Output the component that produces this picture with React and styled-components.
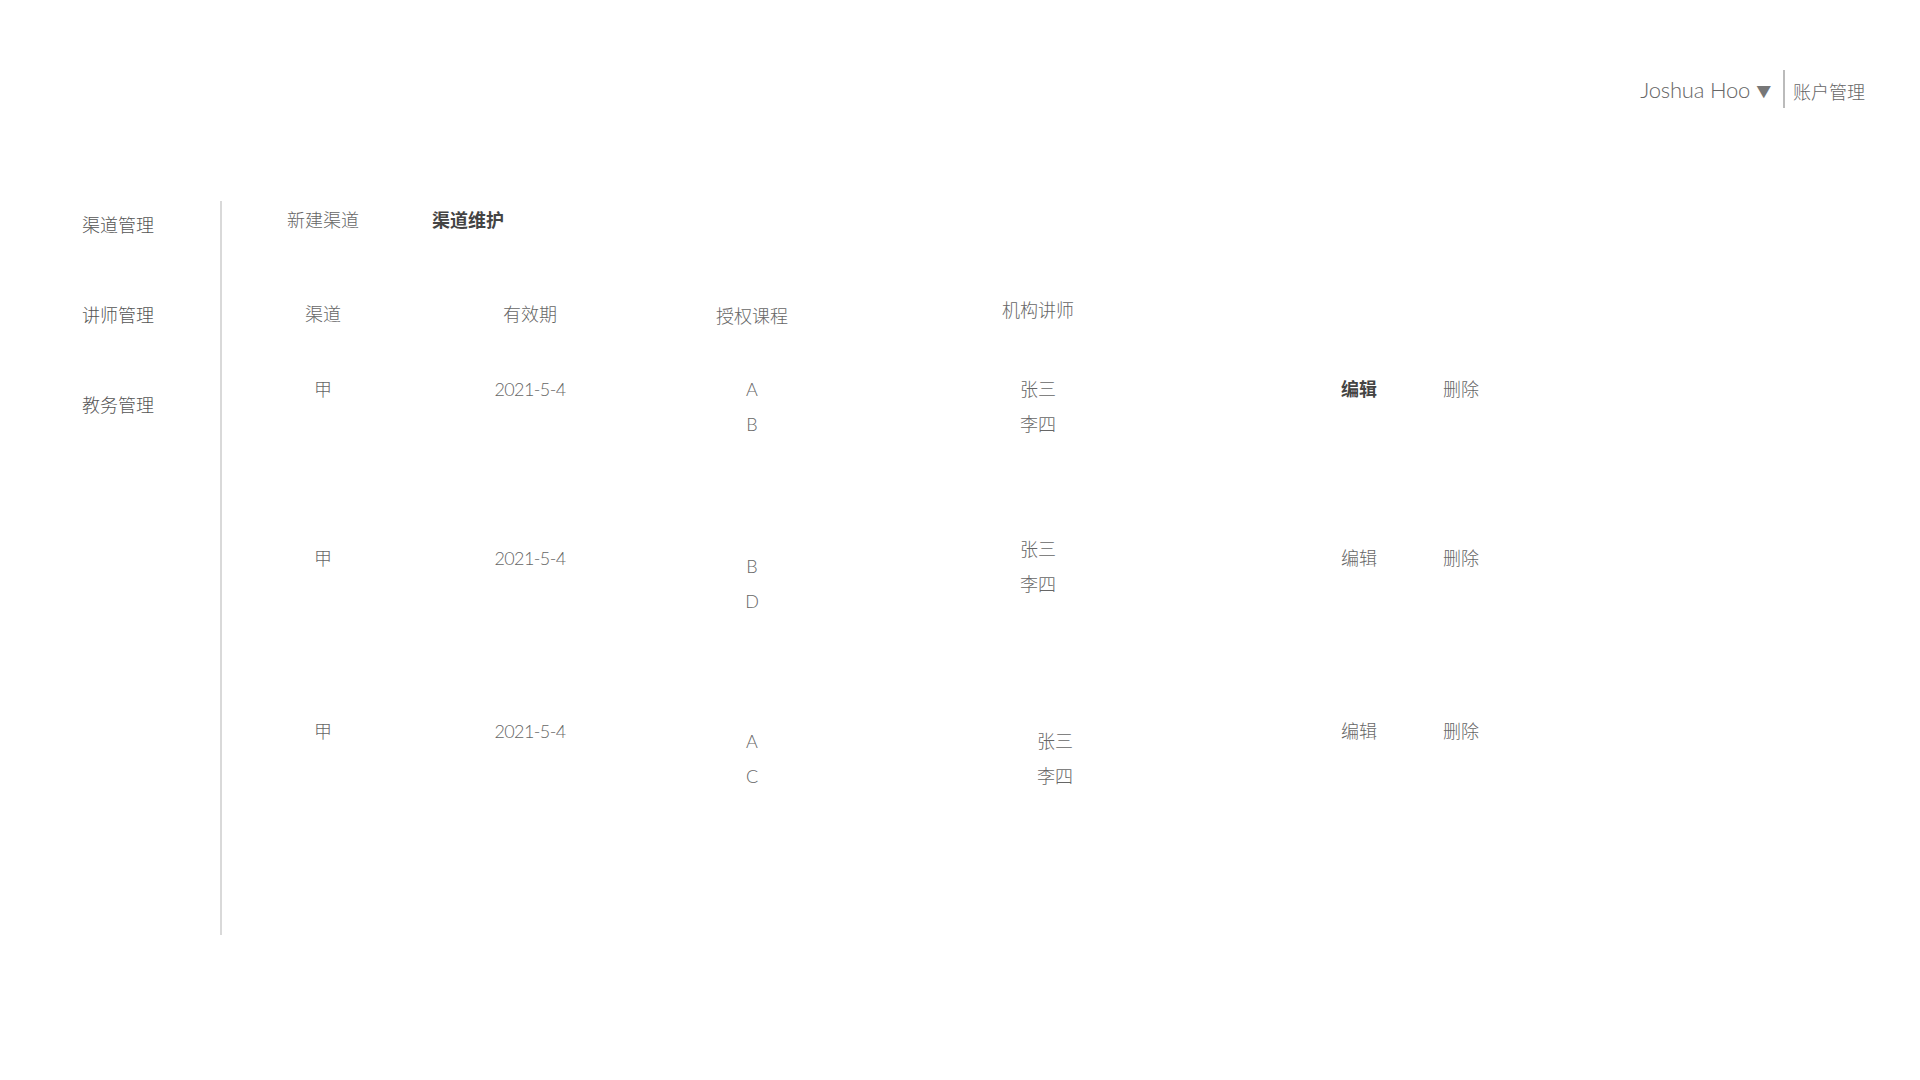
import React from 'react';
import styled, { createGlobalStyle } from 'styled-components';

const GlobalStyle = createGlobalStyle`
	html, body {
		margin: 0;
		padding: 0;
		background: #fff;
	}
	body {
		font-family: 'Lato', 'Noto Sans CJK SC', sans-serif;
		color: #666;
	}
`;

const Page = styled.div`
	width: 1920px;
	min-height: 1080px;
	background: #fff;
`;

const Header = styled.header`
	display: flex;
	justify-content: flex-end;
	align-items: center;
	padding: 70px 55px 0 0;
	height: 38px;
`;

const User = styled.div`
	display: flex;
	align-items: center;
	gap: 6px;
	font-size: 22px;
	font-weight: 300;
	color: #666;
	letter-spacing: -0.2px;
`;

const Caret = styled.span`
	font-size: 15px;
	color: #777;
	margin-top: 3px;
`;

const Divider = styled.div`
	width: 2px;
	height: 38px;
	background: #bbb;
	margin: 0 8px 0 12px;
`;

const Account = styled.div`
	font-size: 18px;
	font-weight: 300;
	color: #666;
	margin-top: 4px;
`;

const Body = styled.div`
	display: flex;
	margin-top: 93px;
`;

const Sidebar = styled.nav`
	box-sizing: border-box;
	width: 222px;
	height: 734px;
	padding: 12px 0 0 82px;
	border-right: 2px solid #d9d9d9;
	display: flex;
	flex-direction: column;
	gap: 66px;
`;

const NavItem = styled.div`
	font-size: 18px;
	line-height: 24px;
	font-weight: 300;
	color: #555;
	white-space: nowrap;
`;

const Main = styled.main`
	flex: 1;
	padding-top: 7px;
`;

const Tabs = styled.div`
	display: flex;
	gap: 73px;
	padding-left: 65px;
`;

const Tab = styled.div`
	font-size: 18px;
	line-height: 24px;
	font-weight: ${(p) => (p.$active ? 700 : 300)};
	color: ${(p) => (p.$active ? '#444' : '#666')};
`;

const Table = styled.div`
	display: flex;
	flex-direction: column;
	margin-top: 65px;
`;

const Row = styled.div`
	display: grid;
	grid-template-columns: 202px 212px 232px 340px 92px 118px 86px;
	align-items: start;
	height: ${(p) => p.$height}px;
	margin-bottom: ${(p) => p.$gap || 0}px;
`;

const Cell = styled.div`
	display: flex;
	flex-direction: column;
	align-items: center;
	font-size: 18px;
	line-height: 35px;
	font-weight: ${(p) => (p.$bold ? 700 : 300)};
	color: ${(p) => (p.$bold ? '#444' : '#666')};
	letter-spacing: ${(p) => (p.$tight ? '-0.6px' : 'normal')};
	transform: translate(${(p) => p.$dx || 0}px, ${(p) => p.$dy || 0}px);
`;

const Spacer = styled.div``;

const rows = [
	{ courses: ['A', 'B'], courseDy: 0, teachers: ['张三', '李四'], teacherDy: 0, teacherDx: 0, bold: true, dy: 0, height: 169 },
	{ courses: ['B', 'D'], courseDy: 8, teachers: ['张三', '李四'], teacherDy: -9, teacherDx: 0, bold: false, dy: 0, height: 173 },
	{ courses: ['A', 'C'], courseDy: 10, teachers: ['张三', '李四'], teacherDy: 10, teacherDx: 17, bold: false, dy: 0, height: 173 },
];

const App = () => {
	return (
		<Page>
			<GlobalStyle />
			<Header>
				<User>
					Joshua Hoo <Caret>▼</Caret>
				</User>
				<Divider />
				<Account>账户管理</Account>
			</Header>
			<Body>
				<Sidebar>
					<NavItem>渠道管理</NavItem>
					<NavItem>讲师管理</NavItem>
					<NavItem>教务管理</NavItem>
				</Sidebar>
				<Main>
					<Tabs>
						<Tab>新建渠道</Tab>
						<Tab $active>渠道维护</Tab>
					</Tabs>
					<Table>
						<Row $height={35} $gap={40}>
							<Cell>渠道</Cell>
							<Cell>有效期</Cell>
							<Cell $dy={2}>授权课程</Cell>
							<Cell $dy={-4}>机构讲师</Cell>
						</Row>
						{rows.map((r, i) => (
							<Row key={i} $height={r.height}>
								<Cell $dy={r.dy}>甲</Cell>
								<Cell $dy={r.dy} $tight>2021-5-4</Cell>
								<Cell $dy={r.courseDy}>
									{r.courses.map((c) => (
										<span key={c}>{c}</span>
									))}
								</Cell>
								<Cell $dy={r.teacherDy} $dx={r.teacherDx}>
									{r.teachers.map((t) => (
										<span key={t}>{t}</span>
									))}
								</Cell>
								<Spacer />
								<Cell $bold={r.bold} $dy={r.dy}>编辑</Cell>
								<Cell $dy={r.dy}>删除</Cell>
							</Row>
						))}
					</Table>
				</Main>
			</Body>
		</Page>
	);
};

export default App;
